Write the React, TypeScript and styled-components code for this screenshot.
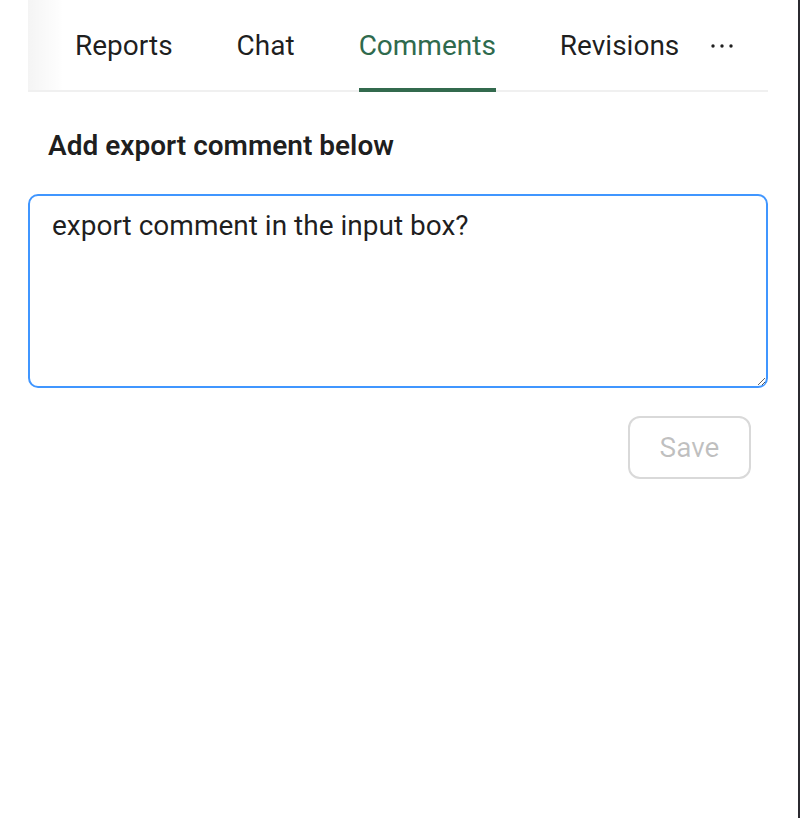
import styled, { createGlobalStyle } from "styled-components";

const GlobalStyle = createGlobalStyle`
  html, body {
    margin: 0;
    padding: 0;
    background: #ffffff;
  }
  * {
    box-sizing: border-box;
  }
`;

const Page = styled.div`
  width: 800px;
  height: 818px;
  display: flex;
  background: #ffffff;
  border-right: 2px solid #2b2a30;
  font-family: Roboto, "Noto Sans", sans-serif;
  color: rgba(0, 0, 0, 0.88);
`;

const Panel = styled.div`
  margin-left: 28px;
  width: 740px;
  display: flex;
  flex-direction: column;
`;

const TabNav = styled.div`
  position: relative;
  height: 92px;
  display: flex;
  align-items: stretch;
  border-bottom: 2px solid #f0f0f0;
`;

const ScrollShadow = styled.div`
  position: absolute;
  left: 0;
  top: 0;
  bottom: 0;
  width: 36px;
  background: linear-gradient(to right, rgba(0, 0, 0, 0.045), rgba(0, 0, 0, 0));
  pointer-events: none;
`;

const TabList = styled.div`
  display: flex;
  align-items: stretch;
  gap: 64px;
  padding-left: 47px;
`;

interface TabProps {
  $active?: boolean;
}

const Tab = styled.div<TabProps>`
  position: relative;
  display: flex;
  align-items: center;
  padding-top: 2px;
  font-size: 28px;
  line-height: 1;
  color: ${({ $active }) => ($active ? "#2f6a4d" : "rgba(0, 0, 0, 0.88)")};
  white-space: nowrap;
`;

const InkBar = styled.span`
  position: absolute;
  left: 0;
  right: 0;
  bottom: -2px;
  height: 4px;
  background: #336a4e;
`;

const MoreButton = styled.div`
  display: flex;
  align-items: center;
  margin-left: 31px;
  padding-top: 2px;
`;

const Content = styled.div`
  display: flex;
  flex-direction: column;
`;

const Heading = styled.div`
  margin: 34px 0 0 20px;
  font-size: 28px;
  line-height: 40px;
  font-weight: 600;
  color: rgba(0, 0, 0, 0.88);
`;

const CommentBox = styled.textarea`
  margin-top: 28px;
  width: 740px;
  height: 194px;
  padding: 10px 22px;
  border: 2px solid #4096ff;
  border-radius: 10px;
  font-family: Roboto, "Noto Sans", sans-serif;
  font-size: 28px;
  line-height: 40px;
  color: rgba(0, 0, 0, 0.88);
  outline: none;
  resize: vertical;
`;

const Actions = styled.div`
  display: flex;
  justify-content: flex-end;
  padding-right: 17px;
  margin-top: 28px;
`;

const SaveButton = styled.button`
  width: 123px;
  height: 63px;
  border: 2px solid #d9d9d9;
  border-radius: 12px;
  background: #ffffff;
  font-family: Roboto, "Noto Sans", sans-serif;
  font-size: 28px;
  color: rgba(0, 0, 0, 0.25);
  cursor: not-allowed;
`;

const tabs = ["Reports", "Chat", "Comments", "Revisions"];

export default function App() {
  return (
    <>
      <GlobalStyle />
      <Page>
        <Panel>
          <TabNav>
            <ScrollShadow />
            <TabList>
              {tabs.map((t) => (
                <Tab key={t} $active={t === "Comments"}>
                  {t}
                  {t === "Comments" && <InkBar />}
                </Tab>
              ))}
            </TabList>
            <MoreButton>
              <svg width="24" height="6" viewBox="0 0 24 6">
                <circle cx="3" cy="3" r="1.7" fill="#1f1f1f" />
                <circle cx="12" cy="3" r="1.7" fill="#1f1f1f" />
                <circle cx="21" cy="3" r="1.7" fill="#1f1f1f" />
              </svg>
            </MoreButton>
          </TabNav>
          <Content>
            <Heading>Add export comment below</Heading>
            <CommentBox defaultValue="export comment in the input box?" />
            <Actions>
              <SaveButton disabled>Save</SaveButton>
            </Actions>
          </Content>
        </Panel>
      </Page>
    </>
  );
}
